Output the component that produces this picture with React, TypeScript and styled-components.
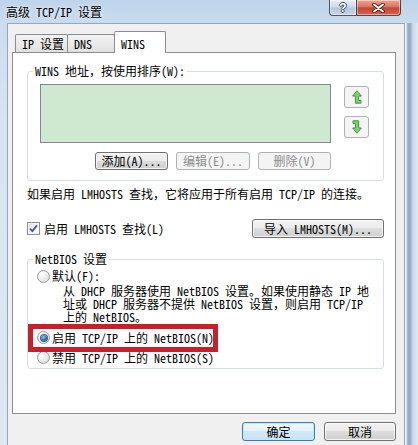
import styled, { createGlobalStyle, css } from 'styled-components';

const GlobalStyle = createGlobalStyle`
    html, body {
        margin: 0;
        padding: 0;
    }

    body {
        font-family: "Noto Sans Mono CJK SC", "Noto Sans CJK SC", "Liberation Mono", monospace;
        font-size: 12px;
        color: #000;
    }

    *, *::before, *::after {
        box-sizing: border-box;
    }
`;

const Window = styled.div`
    width: 418px;
    height: 445px;
    overflow: hidden;
    display: flex;
    flex-direction: column;
    background: linear-gradient(180deg, #bed4ea 0px, #cadcee 24px, #d6e5f3 120px, #dce8f4 100%);
`;

const TitleBar = styled.div`
    height: 23px;
    display: flex;
    justify-content: space-between;
    align-items: flex-start;
    padding: 0 17px 0 6px;
`;

const Title = styled.span`
    line-height: 24px;
    font-size: 12px;
    text-shadow: 0 0 5px rgba(255, 255, 255, 0.9);
`;

const CaptionButtons = styled.div`
    display: flex;
`;

const CaptionButton = styled.div<{ $kind: 'help' | 'close' }>`
    height: 16px;
    display: flex;
    align-items: center;
    justify-content: center;
    border: 1px solid rgba(38, 52, 72, 0.8);
    border-top: none;
    box-shadow: inset 0 0 0 1px rgba(255, 255, 255, 0.45);

    ${(p) => (p.$kind === 'help'
        ? css`
            width: 28px;
            border-radius: 0 0 0 4px;
            background: linear-gradient(180deg, #e6eef6 0%, #cbd9e7 48%, #b3c6da 52%, #c6d7e8 100%);
        `
        : css`
            width: 45px;
            margin-left: -1px;
            border-radius: 0 0 4px 0;
            background: linear-gradient(180deg, #eba592 0%, #d97760 45%, #c8452e 52%, #d4644a 100%);
        `)}
`;

const HelpGlyph = styled.span`
    font-family: "Liberation Sans", sans-serif;
    font-weight: bold;
    font-size: 12px;
    line-height: 14px;
    color: #fff;
    text-shadow: -1px 0 #3a4a5e, 1px 0 #3a4a5e, 0 -1px #3a4a5e, 0 1px #3a4a5e;
`;

const FrameBody = styled.div`
    flex: 1;
    display: flex;
    padding-left: 7px;
`;

const Client = styled.div`
    width: 398px;
    background: #f0f0f0;
    border: 1px solid #93a8bd;
    border-bottom: none;
    padding: 7px 8px 0 4px;
    display: flex;
    flex-direction: column;
`;

const RightEdge = styled.div`
    flex: 1;
    background: linear-gradient(90deg, #f3f7fb 0px, #f3f7fb 1px, #aebfd1 2px, #8fa7c0 4px, #a3b8ce 6px, #cddcea 8px, #dde8f3 100%);
`;

const TabStrip = styled.div`
    height: 21px;
    display: flex;
    align-items: flex-end;
    padding-left: 3px;
    position: relative;
    z-index: 1;
`;

const Tab = styled.div<{ $width: number; $active?: boolean }>`
    width: ${(p) => p.$width}px;
    height: 18px;
    margin-left: -1px;
    padding-left: 6px;
    line-height: 17px;
    white-space: pre;
    border: 1px solid #898c95;
    border-bottom: none;
    border-radius: 2px 2px 0 0;
    background: linear-gradient(180deg, #f3f3f3 0%, #eaeaea 50%, #e0e0e0 100%);

    &:first-child {
        margin-left: 0;
    }

    ${(p) => p.$active && css`
        height: 22px;
        margin-bottom: -1px;
        padding-top: 3px;
        background: #fff;
    `}
`;

const TabPage = styled.div`
    height: 362px;
    border: 1px solid #898c95;
    background: #fff;
    padding: 0 11px 0 14px;
    display: flex;
    flex-direction: column;
`;

const Group = styled.fieldset<{ $top: number }>`
    margin: ${(p) => p.$top}px 0 0 0;
    padding: 0;
    min-width: 0;
    border: 1px solid #d5dfe5;
    border-radius: 3px;
`;

const GroupCaption = styled.legend`
    margin-left: 5px;
    padding: 0 2px;
    line-height: 14px;
    white-space: pre;
`;

const AddressBody = styled.div`
    display: grid;
    grid-template-columns: 291px 25px;
    column-gap: 13px;
    padding: 6px 0 10px 12px;
`;

const AddressList = styled.div`
    height: 59px;
    border: 1px solid #828790;
    background: #cfe8d0;
`;

const OrderButtons = styled.div`
    display: flex;
    flex-direction: column;
    gap: 8px;
    padding-top: 2px;
`;

const OrderButton = styled.div`
    height: 22px;
    display: flex;
    align-items: center;
    justify-content: center;
    border: 1px solid #adb2b5;
    border-radius: 3px;
    background: #f4f4f4;
`;

const ListActions = styled.div`
    grid-column: 1;
    display: flex;
    justify-content: flex-end;
    gap: 8px;
    margin-top: 9px;
`;

const PushButton = styled.button<{ $width: number; $height?: number; $default?: boolean }>`
    width: ${(p) => p.$width}px;
    height: ${(p) => p.$height ?? 18}px;
    padding: 0;
    font: inherit;
    font-size: 12px;
    line-height: 16px;
    white-space: pre;
    color: #000;
    border: 1px solid #707070;
    border-radius: 3px;
    background: linear-gradient(180deg, #f2f2f2 0%, #ebebeb 50%, #dddddd 50%, #cfcfcf 100%);
    box-shadow: inset 0 0 0 1px rgba(255, 255, 255, 0.75);

    &:disabled {
        color: #8d8d8d;
        border-color: #adb2b5;
        background: #f4f4f4;
        box-shadow: none;
    }

    ${(p) => p.$default && css`
        border-color: #3c7fb1;
        background: linear-gradient(180deg, #f2f9fd 0%, #e3f1fa 50%, #d3e9f7 50%, #c8e2f3 100%);
        box-shadow: inset 0 0 0 1px #c5e6f8;
    `}
`;

const Note = styled.div`
    margin-top: 6px;
    line-height: 14px;
    white-space: pre;
`;

const LmhostsRow = styled.div`
    height: 19px;
    margin-top: 18px;
    display: flex;
    align-items: center;
    justify-content: space-between;
`;

const CheckLabel = styled.label`
    display: flex;
    align-items: center;
    gap: 4px;
    line-height: 14px;
    white-space: pre;
`;

const CheckBox = styled.span`
    width: 13px;
    height: 13px;
    display: flex;
    align-items: center;
    justify-content: center;
    border: 1px solid #8e8f8f;
    background: linear-gradient(135deg, #dcdcdc 0%, #f6f6f6 60%, #ffffff 100%);
    box-shadow: inset 0 0 0 1px #f4f4f4;
`;

const NetbiosBody = styled.div`
    padding: 2px 0 2px 5px;
`;

const RadioRow = styled.label<{ $marked?: boolean }>`
    width: 180px;
    height: 16px;
    display: flex;
    align-items: center;
    gap: 2px;
    padding-left: 4px;
    line-height: 14px;
    white-space: pre;

    ${(p) => p.$marked && css`
        height: 18px;
        margin: 6px 0 3px;
        outline: 5px solid #c8202b;
    `}
`;

const RadioDot = styled.span<{ $checked?: boolean }>`
    width: 13px;
    height: 13px;
    flex: none;
    display: flex;
    align-items: center;
    justify-content: center;
    border-radius: 50%;
    border: 1px solid #9a9a9a;
    background: radial-gradient(circle at 35% 30%, #ffffff 0%, #eeeeee 45%, #d2d2d2 100%);

    ${(p) => p.$checked && css`
        &::after {
            content: '';
            width: 6px;
            height: 6px;
            border-radius: 50%;
            background: radial-gradient(circle at 40% 35%, #8fd0f5 0%, #3a7fc0 45%, #14345f 100%);
            box-shadow: 0 0 0 1px #3f5f85;
        }
    `}
`;

const Explain = styled.div`
    margin-top: -0.5px;
    padding-left: 30px;
    line-height: 13px;
    white-space: pre;
`;

const DialogButtons = styled.div`
    margin-top: 8px;
    display: flex;
    justify-content: flex-end;
    gap: 9px;
`;

const CloseGlyph = () => (
    <svg width="13" height="10" viewBox="0 0 13 10">
        <path d="M2 1.5 L11 8.5 M11 1.5 L2 8.5" stroke="#3b1f1a" strokeWidth="3.6" strokeLinecap="round" />
        <path d="M2 1.5 L11 8.5 M11 1.5 L2 8.5" stroke="#ffffff" strokeWidth="2" strokeLinecap="round" />
    </svg>
);

const ArrowUp = () => (
    <svg width="10" height="14" viewBox="0 0 10 14">
        <path
            d="M5 0.8 L9.4 6 H6.6 V10.4 H9 V13.2 H3.4 V6 H0.6 Z"
            fill="#86cc7e"
            stroke="#3f9a3c"
            strokeWidth="1"
            strokeLinejoin="round"
        />
    </svg>
);

const ArrowDown = () => (
    <svg width="10" height="14" viewBox="0 0 10 14">
        <path
            d="M1 0.8 H6.6 V8 H9.4 L5 13.2 L0.6 8 H3.4 V3.6 H1 Z"
            fill="#86cc7e"
            stroke="#3f9a3c"
            strokeWidth="1"
            strokeLinejoin="round"
        />
    </svg>
);

const CheckMark = () => (
    <svg width="9" height="9" viewBox="0 0 9 9">
        <path d="M1 4.6 L3.4 7.2 L8 1.4" fill="none" stroke="#4a5f8e" strokeWidth="1.9" strokeLinejoin="round" />
    </svg>
);

type NetbiosChoice = {
    label: string,
    checked?: boolean,
    marked?: boolean
}

const choices: NetbiosChoice[] = [
    { label: '启用 TCP/IP 上的 NetBIOS(N)', checked: true, marked: true },
    { label: '禁用 TCP/IP 上的 NetBIOS(S)' },
];

const App = () => (
    <>
        <GlobalStyle />
        <Window>
            <TitleBar>
                <Title>高级 TCP/IP 设置</Title>
                <CaptionButtons>
                    <CaptionButton $kind="help">
                        <HelpGlyph>?</HelpGlyph>
                    </CaptionButton>
                    <CaptionButton $kind="close">
                        <CloseGlyph />
                    </CaptionButton>
                </CaptionButtons>
            </TitleBar>
            <FrameBody>
                <Client>
                    <TabStrip>
                        <Tab $width={53}>IP 设置</Tab>
                        <Tab $width={48}>DNS</Tab>
                        <Tab $width={52} $active>WINS</Tab>
                    </TabStrip>
                    <TabPage>
                        <Group $top={11}>
                            <GroupCaption>WINS 地址，按使用排序(W):</GroupCaption>
                            <AddressBody>
                                <AddressList />
                                <OrderButtons>
                                    <OrderButton><ArrowUp /></OrderButton>
                                    <OrderButton><ArrowDown /></OrderButton>
                                </OrderButtons>
                                <ListActions>
                                    <PushButton $width={73}>添加(A)...</PushButton>
                                    <PushButton $width={74} disabled>编辑(E)...</PushButton>
                                    <PushButton $width={73} disabled>删除(V)</PushButton>
                                </ListActions>
                            </AddressBody>
                        </Group>
                        <Note>如果启用 LMHOSTS 查找，它将应用于所有启用 TCP/IP 的连接。</Note>
                        <LmhostsRow>
                            <CheckLabel>
                                <CheckBox><CheckMark /></CheckBox>
                                启用 LMHOSTS 查找(L)
                            </CheckLabel>
                            <PushButton $width={132} $height={19}>导入 LMHOSTS(M)...</PushButton>
                        </LmhostsRow>
                        <Group $top={14}>
                            <GroupCaption>NetBIOS 设置</GroupCaption>
                            <NetbiosBody>
                                <RadioRow>
                                    <RadioDot />
                                    默认(F):
                                </RadioRow>
                                <Explain>
                                    从 DHCP 服务器使用 NetBIOS 设置。如果使用静态 IP 地{'\n'}
                                    址或 DHCP 服务器不提供 NetBIOS 设置，则启用 TCP/IP{'\n'}
                                    上的 NetBIOS。
                                </Explain>
                                {choices.map((choice) => (
                                    <RadioRow key={choice.label} $marked={choice.marked}>
                                        <RadioDot $checked={choice.checked} />
                                        {choice.label}
                                    </RadioRow>
                                ))}
                            </NetbiosBody>
                        </Group>
                    </TabPage>
                    <DialogButtons>
                        <PushButton $width={73} $height={19} $default>确定</PushButton>
                        <PushButton $width={72} $height={19}>取消</PushButton>
                    </DialogButtons>
                </Client>
                <RightEdge />
            </FrameBody>
        </Window>
    </>
);

export default App;
